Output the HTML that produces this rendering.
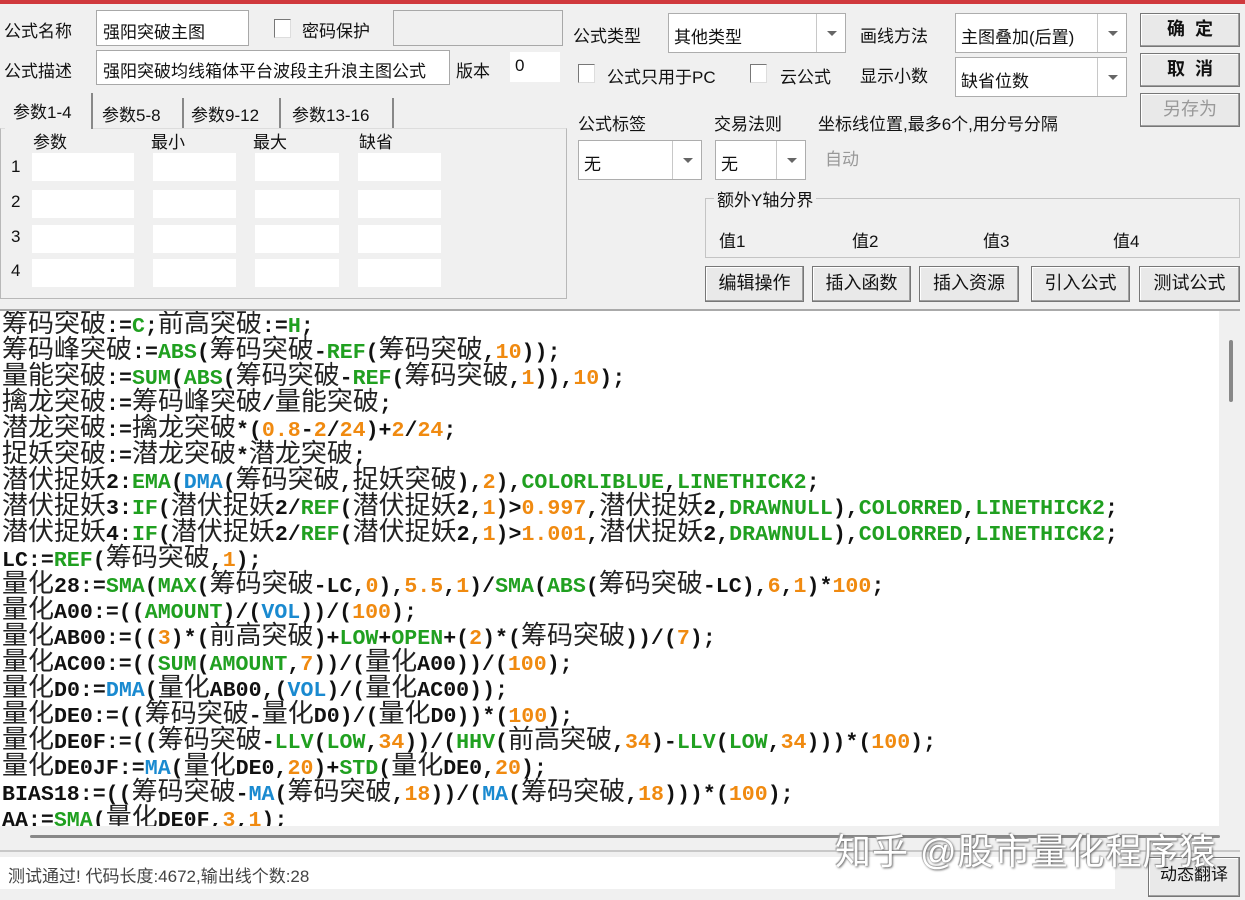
<!DOCTYPE html>
<html><head><meta charset="utf-8">
<style>
*{margin:0;padding:0;box-sizing:border-box}
body{width:1245px;height:900px;background:#f0f0f0;position:relative;overflow:hidden;font-family:"Liberation Sans","Noto Sans CJK SC",sans-serif;font-size:17px;color:#111}
.a{position:absolute;white-space:nowrap}
.in{position:absolute;background:#fff;border:1px solid #a8a8a8}
.cb{position:absolute;width:17px;height:19px;background:#fff;border:1px solid #777;border-right-color:#ddd;border-bottom-color:#ddd}
.combo{position:absolute;background:#fff;border:1px solid #adadad}
.combo .d{position:absolute;top:0;bottom:0;border-left:1px solid #c8c8c8;width:29px;right:0}
.combo .d:after{content:"";position:absolute;left:10px;top:50%;margin-top:-2px;border-left:5px solid transparent;border-right:5px solid transparent;border-top:5px solid #666}
.btn{position:absolute;background:#e9e9e9;border:1px solid #777;box-shadow:inset -1px -1px 0 #a0a0a0,inset 1px 1px 0 #fff;text-align:center;font-size:18px}
.pi{position:absolute;background:#fff;height:28px}
#code{position:absolute;left:0;top:309px;width:1240px;height:517px;background:#fff;border-top:2px solid #aaa;overflow:hidden}
.ln{position:absolute;left:2px;height:26px;line-height:26px;font-family:"Liberation Mono",monospace;font-weight:bold;font-size:21.6px;color:#111;white-space:nowrap}
.ln i{font-style:normal;font-family:"Noto Sans CJK SC",sans-serif;font-weight:normal;font-size:26px;color:#222}
.g{color:#20a020}.o{color:#f08a10}.b{color:#1a8ad0}
</style></head><body>
<div class="a" style="left:0;top:0;width:1245px;height:4px;background:#d0393d"></div>

<div class="a" style="left:4px;top:17px">公式名称</div>
<div class="in" style="left:96px;top:10px;width:153px;height:36px;padding:7px 6px">强阳突破主图</div>
<div class="cb" style="left:274px;top:19px"></div>
<div class="a" style="left:302px;top:17px">密码保护</div>
<div class="in" style="left:393px;top:10px;width:170px;height:36px;background:#f0f0f0"></div>

<div class="a" style="left:4px;top:57px">公式描述</div>
<div class="in" style="left:96px;top:50px;width:354px;height:35px;padding:6px 6px;overflow:hidden">强阳突破均线箱体平台波段主升浪主图公式</div>
<div class="a" style="left:456px;top:57px">版本</div>
<div class="a" style="left:510px;top:52px;width:50px;height:30px;background:#fff;padding:4px 5px">0</div>

<div class="a" style="left:0;top:128px;width:567px;height:171px;border:1px solid #b8b8b8;border-top-color:#ddd"></div>
<div class="a" style="left:5px;top:93px;width:88px;height:36px;background:#f0f0f0;border-right:2px solid #888;padding:5px 8px;font-size:17px">参数1-4</div>
<div class="a" style="left:94px;top:98px;width:90px;height:30px;border-right:2px solid #888;padding:3px 8px">参数5-8</div>
<div class="a" style="left:185px;top:98px;width:96px;height:30px;border-right:2px solid #888;padding:3px 6px">参数9-12</div>
<div class="a" style="left:284px;top:98px;width:110px;height:30px;border-right:2px solid #888;padding:3px 8px">参数13-16</div>
<div class="a" style="left:33px;top:128px">参数</div>
<div class="a" style="left:151px;top:128px">最小</div>
<div class="a" style="left:253px;top:128px">最大</div>
<div class="a" style="left:359px;top:128px">缺省</div>

<div class="a" style="left:11px;top:157px">1</div>
<div class="a" style="left:11px;top:192px">2</div>
<div class="a" style="left:11px;top:227px">3</div>
<div class="a" style="left:11px;top:261px">4</div>
<div class="pi" style="left:32px;top:153px;width:102px"></div><div class="pi" style="left:153px;top:153px;width:83px"></div><div class="pi" style="left:255px;top:153px;width:84px"></div><div class="pi" style="left:358px;top:153px;width:83px"></div>
<div class="pi" style="left:32px;top:190px;width:102px"></div><div class="pi" style="left:153px;top:190px;width:83px"></div><div class="pi" style="left:255px;top:190px;width:84px"></div><div class="pi" style="left:358px;top:190px;width:83px"></div>
<div class="pi" style="left:32px;top:225px;width:102px"></div><div class="pi" style="left:153px;top:225px;width:83px"></div><div class="pi" style="left:255px;top:225px;width:84px"></div><div class="pi" style="left:358px;top:225px;width:83px"></div>
<div class="pi" style="left:32px;top:259px;width:102px"></div><div class="pi" style="left:153px;top:259px;width:83px"></div><div class="pi" style="left:255px;top:259px;width:84px"></div><div class="pi" style="left:358px;top:259px;width:83px"></div>

<div class="a" style="left:573px;top:22px">公式类型</div>
<div class="combo" style="left:668px;top:13px;width:178px;height:40px"><span class="a" style="left:5px;top:9px">其他类型</span><div class="d"></div></div>
<div class="a" style="left:860px;top:22px">画线方法</div>
<div class="combo" style="left:955px;top:13px;width:172px;height:40px"><span class="a" style="left:5px;top:9px">主图叠加(后置)</span><div class="d"></div></div>

<div class="cb" style="left:578px;top:64px"></div>
<div class="a" style="left:607px;top:63px">公式只用于PC</div>
<div class="cb" style="left:750px;top:64px"></div>
<div class="a" style="left:780px;top:63px">云公式</div>
<div class="a" style="left:860px;top:62px">显示小数</div>
<div class="combo" style="left:955px;top:57px;width:172px;height:40px"><span class="a" style="left:5px;top:9px">缺省位数</span><div class="d"></div></div>

<div class="btn" style="left:1140px;top:13px;width:100px;height:34px;line-height:31px;font-weight:bold">确&nbsp;&nbsp;定</div>
<div class="btn" style="left:1140px;top:53px;width:100px;height:34px;line-height:31px;font-weight:bold">取&nbsp;&nbsp;消</div>
<div class="btn" style="left:1140px;top:93px;width:100px;height:34px;line-height:31px;color:#999">另存为</div>

<div class="a" style="left:578px;top:110px">公式标签</div>
<div class="a" style="left:714px;top:110px">交易法则</div>
<div class="a" style="left:818px;top:110px">坐标线位置,最多6个,用分号分隔</div>
<div class="combo" style="left:578px;top:140px;width:124px;height:40px"><span class="a" style="left:5px;top:9px">无</span><div class="d"></div></div>
<div class="combo" style="left:715px;top:140px;width:91px;height:40px"><span class="a" style="left:5px;top:9px">无</span><div class="d"></div></div>
<div class="a" style="left:825px;top:145px;color:#999">自动</div>

<div class="a" style="left:705px;top:198px;width:535px;height:60px;border:1px solid #c4c4c4"></div>
<div class="a" style="left:714px;top:186px;background:#f0f0f0;padding:0 3px">额外Y轴分界</div>
<div class="a" style="left:719px;top:227px">值1</div>
<div class="a" style="left:852px;top:227px">值2</div>
<div class="a" style="left:983px;top:227px">值3</div>
<div class="a" style="left:1113px;top:227px">值4</div>

<div class="btn" style="left:705px;top:266px;width:99px;height:36px;line-height:33px">编辑操作</div>
<div class="btn" style="left:812px;top:266px;width:99px;height:36px;line-height:33px">插入函数</div>
<div class="btn" style="left:919px;top:266px;width:100px;height:36px;line-height:33px">插入资源</div>
<div class="btn" style="left:1031px;top:266px;width:99px;height:36px;line-height:33px">引入公式</div>
<div class="btn" style="left:1139px;top:266px;width:101px;height:36px;line-height:33px">测试公式</div>

<div id="code">
<div class="ln" style="top:-2px"><i>筹码突破</i>:=<span class="g">C</span>;<i>前高突破</i>:=<span class="g">H</span>;</div>
<div class="ln" style="top:24px"><i>筹码峰突破</i>:=<span class="g">ABS</span>(<i>筹码突破</i>-<span class="g">REF</span>(<i>筹码突破</i>,<span class="o">10</span>));</div>
<div class="ln" style="top:50px"><i>量能突破</i>:=<span class="g">SUM</span>(<span class="g">ABS</span>(<i>筹码突破</i>-<span class="g">REF</span>(<i>筹码突破</i>,<span class="o">1</span>)),<span class="o">10</span>);</div>
<div class="ln" style="top:76px"><i>擒龙突破</i>:=<i>筹码峰突破</i>/<i>量能突破</i>;</div>
<div class="ln" style="top:102px"><i>潜龙突破</i>:=<i>擒龙突破</i>*(<span class="o">0.8</span>-<span class="o">2</span>/<span class="o">24</span>)+<span class="o">2</span>/<span class="o">24</span>;</div>
<div class="ln" style="top:128px"><i>捉妖突破</i>:=<i>潜龙突破</i>*<i>潜龙突破</i>;</div>
<div class="ln" style="top:154px"><i>潜伏捉妖</i>2:<span class="g">EMA</span>(<span class="b">DMA</span>(<i>筹码突破</i>,<i>捉妖突破</i>),<span class="o">2</span>),<span class="g">COLORLIBLUE</span>,<span class="g">LINETHICK2</span>;</div>
<div class="ln" style="top:180px"><i>潜伏捉妖</i>3:<span class="g">IF</span>(<i>潜伏捉妖</i>2/<span class="g">REF</span>(<i>潜伏捉妖</i>2,<span class="o">1</span>)&gt;<span class="o">0.997</span>,<i>潜伏捉妖</i>2,<span class="g">DRAWNULL</span>),<span class="g">COLORRED</span>,<span class="g">LINETHICK2</span>;</div>
<div class="ln" style="top:206px"><i>潜伏捉妖</i>4:<span class="g">IF</span>(<i>潜伏捉妖</i>2/<span class="g">REF</span>(<i>潜伏捉妖</i>2,<span class="o">1</span>)&gt;<span class="o">1.001</span>,<i>潜伏捉妖</i>2,<span class="g">DRAWNULL</span>),<span class="g">COLORRED</span>,<span class="g">LINETHICK2</span>;</div>
<div class="ln" style="top:232px">LC:=<span class="g">REF</span>(<i>筹码突破</i>,<span class="o">1</span>);</div>
<div class="ln" style="top:258px"><i>量化</i>28:=<span class="g">SMA</span>(<span class="g">MAX</span>(<i>筹码突破</i>-LC,<span class="o">0</span>),<span class="o">5.5</span>,<span class="o">1</span>)/<span class="g">SMA</span>(<span class="g">ABS</span>(<i>筹码突破</i>-LC),<span class="o">6</span>,<span class="o">1</span>)*<span class="o">100</span>;</div>
<div class="ln" style="top:284px"><i>量化</i>A00:=((<span class="g">AMOUNT</span>)/(<span class="b">VOL</span>))/(<span class="o">100</span>);</div>
<div class="ln" style="top:310px"><i>量化</i>AB00:=((<span class="o">3</span>)*(<i>前高突破</i>)+<span class="g">LOW</span>+<span class="g">OPEN</span>+(<span class="o">2</span>)*(<i>筹码突破</i>))/(<span class="o">7</span>);</div>
<div class="ln" style="top:336px"><i>量化</i>AC00:=((<span class="g">SUM</span>(<span class="g">AMOUNT</span>,<span class="o">7</span>))/(<i>量化</i>A00))/(<span class="o">100</span>);</div>
<div class="ln" style="top:362px"><i>量化</i>D0:=<span class="b">DMA</span>(<i>量化</i>AB00,(<span class="b">VOL</span>)/(<i>量化</i>AC00));</div>
<div class="ln" style="top:388px"><i>量化</i>DE0:=((<i>筹码突破</i>-<i>量化</i>D0)/(<i>量化</i>D0))*(<span class="o">100</span>);</div>
<div class="ln" style="top:414px"><i>量化</i>DE0F:=((<i>筹码突破</i>-<span class="g">LLV</span>(<span class="g">LOW</span>,<span class="o">34</span>))/(<span class="g">HHV</span>(<i>前高突破</i>,<span class="o">34</span>)-<span class="g">LLV</span>(<span class="g">LOW</span>,<span class="o">34</span>)))*(<span class="o">100</span>);</div>
<div class="ln" style="top:440px"><i>量化</i>DE0JF:=<span class="b">MA</span>(<i>量化</i>DE0,<span class="o">20</span>)+<span class="g">STD</span>(<i>量化</i>DE0,<span class="o">20</span>);</div>
<div class="ln" style="top:466px">BIAS18:=((<i>筹码突破</i>-<span class="b">MA</span>(<i>筹码突破</i>,<span class="o">18</span>))/(<span class="b">MA</span>(<i>筹码突破</i>,<span class="o">18</span>)))*(<span class="o">100</span>);</div>
<div class="ln" style="top:492px">AA:=<span class="g">SMA</span>(<i>量化</i>DE0F,<span class="o">3</span>,<span class="o">1</span>);</div>
<div class="a" style="left:1219px;top:0;width:21px;height:517px;background:#f0f0f0"></div>
<div class="a" style="left:1229px;top:29px;width:4px;height:62px;background:#888;border-radius:2px"></div>
</div>

<div class="a" style="left:0;top:826px;width:1240px;height:26px;background:#f0f0f0;border-bottom:2px solid #c8c8c8"></div>
<div class="a" style="left:30px;top:835px;width:1190px;height:3px;background:#888;border-radius:2px"></div>

<div class="a" style="left:0;top:857px;width:1115px;height:32px;background:#fff;padding:5px 8px;font-size:17px;color:#444">测试通过! 代码长度:4672,输出线个数:28</div>
<div class="btn" style="left:1148px;top:857px;width:92px;height:40px;line-height:34px;font-size:17px">动态翻译</div>

<div class="a" style="left:835px;top:823px;font-size:36px;letter-spacing:1px;color:#fff;text-shadow:1px 1px 2px #666,-1px -1px 1px #999">知乎 @股市量化程序猿</div>
</body></html>
